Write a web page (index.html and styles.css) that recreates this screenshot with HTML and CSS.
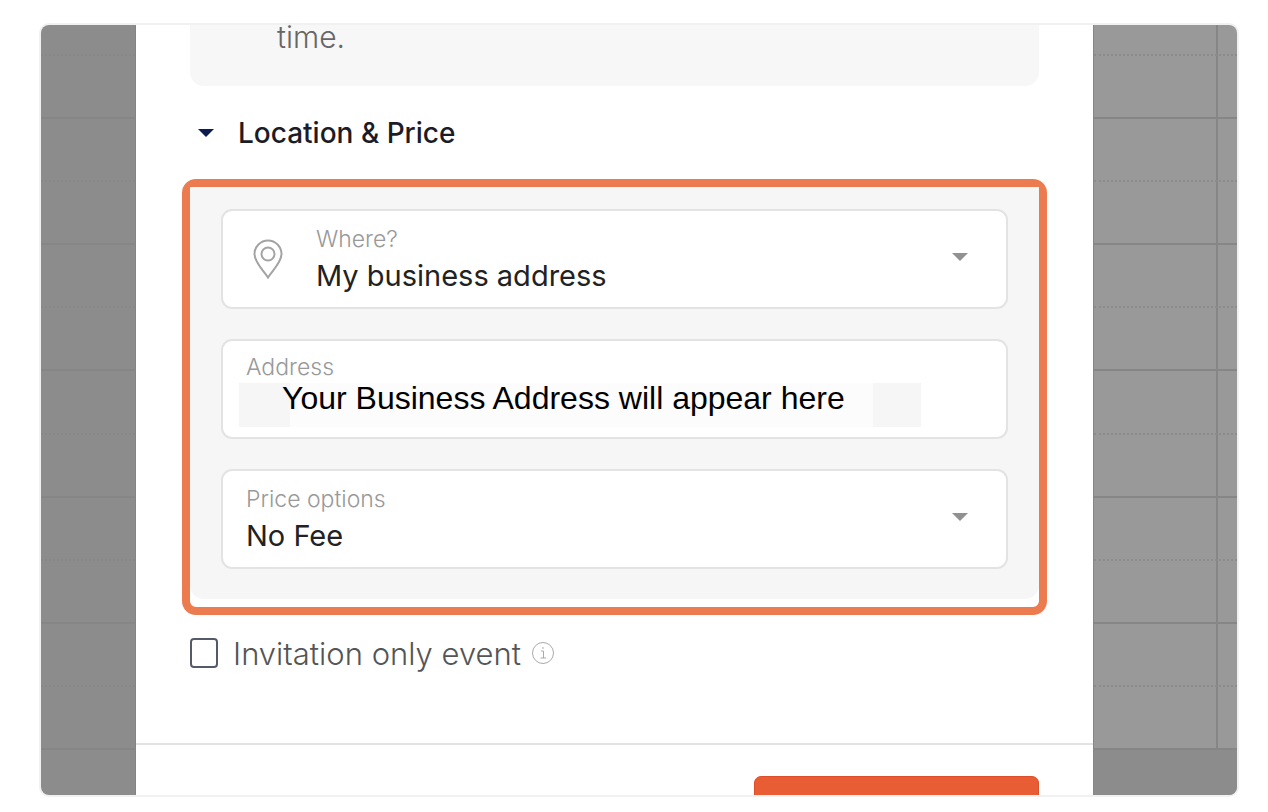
FILE: index.html
```html
<!DOCTYPE html>
<html lang="en">
<head>
<meta charset="utf-8">
<title>Location &amp; Price</title>
<link rel="stylesheet" href="styles.css">
</head>
<body>
<div class="frame">
  <div class="calendar calendar-left">
    <div class="slot"></div><div class="slot"></div><div class="slot"></div><div class="slot"></div>
    <div class="slot"></div><div class="slot"></div><div class="slot"></div><div class="slot"></div>
    <div class="slot"></div><div class="slot"></div><div class="slot"></div><div class="slot"></div>
    <div class="rest"></div>
  </div>

  <main class="modal">
    <div class="body">
      <div class="note">time.</div>

      <button class="section" type="button" aria-expanded="true">
        <svg class="caret" viewBox="0 0 16 8" aria-hidden="true"><path d="M0 0H16L8 8Z"/></svg>
        Location &amp; Price
      </button>

      <section class="highlight">
        <div class="panel">
          <div class="field">
            <svg class="pin" viewBox="0 0 30 40" aria-hidden="true">
              <path d="M15 38.500C11 32 1.500 23.500 1.500 15A13.500 13.500 0 0 1 28.500 15C28.500 23.500 19 32 15 38.500Z"/>
              <circle cx="15" cy="15" r="6.500"/>
            </svg>
            <div class="text">
              <label for="where">Where?</label>
              <select id="where"><option>My business address</option></select>
            </div>
            <svg class="arrow" viewBox="0 0 16 8" aria-hidden="true"><path d="M0 0H16L8 8Z"/></svg>
          </div>

          <div class="field field-address">
            <label for="address">Address</label>
            <input id="address" type="text" value="Your Business Address will appear here">
          </div>

          <div class="field">
            <div class="text">
              <label for="price">Price options</label>
              <select id="price"><option>No Fee</option></select>
            </div>
            <svg class="arrow" viewBox="0 0 16 8" aria-hidden="true"><path d="M0 0H16L8 8Z"/></svg>
          </div>
        </div>
      </section>

      <div class="invite">
        <input id="invite" type="checkbox">
        <label for="invite">Invitation only event</label>
        <svg class="info" viewBox="0 0 24 24" aria-hidden="true">
          <circle cx="12" cy="12" r="10.500"/>
          <path d="M10 10H12.500V17M9.500 17H15M12 6V8"/>
        </svg>
      </div>
    </div>
    <footer class="footer"><button class="submit" type="button" aria-label="Save"></button></footer>
  </main>

  <div class="calendar calendar-right">
    <div class="slot"></div><div class="slot"></div><div class="slot"></div><div class="slot"></div>
    <div class="slot"></div><div class="slot"></div><div class="slot"></div><div class="slot"></div>
    <div class="slot"></div><div class="slot"></div><div class="slot"></div><div class="slot"></div>
    <div class="rest"></div>
  </div>
</div>
</body>
</html>
```
FILE: styles.css
```css
* {
  box-sizing: border-box;
}

body {
  margin: 0;
  padding: 23px 29px 15px 39px;
  background: #fff;
  font-family: Inter, "Open Sans", sans-serif;
}

button,
input,
select {
  margin: 0;
  padding: 0;
  border: 0;
  background: none;
  font: inherit;
}

.frame {
  display: grid;
  grid-template-columns: 95px minmax(0, 1fr) 144px;
  height: calc(100vh - 38px);
  border: 2px solid #f1f1f1;
  border-radius: 10px;
  overflow: hidden;
}

/* Calendar behind the modal */
.calendar {
  display: grid;
  grid-template-rows: 31px repeat(11, minmax(0, 1fr)) 45px;
}

.calendar-left {
  background: #8c8c8c;
  border-right: 1px solid #848484;
}

.calendar-right {
  border-left: 1px solid #868686;
  background: linear-gradient(to right, transparent 122px, #868686 122px, #868686 124px, transparent 124px) #999;
}

.slot {
  border-bottom: 2px solid #868686;
}

.slot:nth-child(odd) {
  border-bottom: 2px dotted #8b8b8b;
}

.calendar-left .slot {
  border-bottom-color: #868686;
}

.calendar-left .slot:nth-child(odd) {
  border-bottom-color: #888;
}

.calendar-right .rest {
  background: #8c8c8c;
}

/* Modal */
.modal {
  display: flex;
  flex-direction: column;
  background: #fff;
  overflow: hidden;
}

.body {
  flex: 1;
  padding: 0 54px;
}

.note {
  height: 61px;
  padding-left: 87px;
  border-radius: 0 0 14px 14px;
  background: #f7f7f7;
  color: #666;
  font-size: 30px;
  font-weight: 300;
  line-height: 24px;
}

.section {
  display: flex;
  align-items: center;
  gap: 24px;
  height: 94px;
  margin-bottom: -1px;
  padding-left: 8px;
  color: #1c1c28;
  font-size: 28px;
  font-weight: 500;
}

.caret {
  width: 16px;
  height: 8px;
  fill: #0c1c50;
}

.highlight {
  margin: 0 -8px;
  padding-bottom: 8px;
  border: 8px solid #ec7b50;
  border-radius: 14px;
}

.panel {
  display: grid;
  gap: 30px;
  padding: 22px 31px 30px;
  border-radius: 0 0 14px 14px;
  background: #f6f6f6;
}

.field {
  display: flex;
  align-items: center;
  height: 100px;
  padding: 0 38px 0 23px;
  border: 2px solid #e3e3e3;
  border-radius: 11px;
  background: #fff;
}

.text {
  display: grid;
  flex: 1;
}

.field label {
  color: #999;
  font-size: 23px;
  font-weight: 300;
  line-height: 32px;
}

.field select {
  width: 100%;
  height: 40px;
  appearance: none;
  color: #222;
  font-size: 29px;
}

.pin {
  width: 30px;
  height: 40px;
  margin: 0 33px 0 7px;
  fill: none;
  stroke: #a3a3a3;
  stroke-width: 2;
}

.arrow {
  width: 16px;
  height: 8px;
  margin-bottom: 4px;
  fill: #919191;
}

.field-address {
  flex-direction: column;
  align-items: flex-start;
  padding: 10px 16px;
}

.field-address label {
  padding-left: 7px;
}

.field-address input {
  width: 682px;
  max-width: 100%;
  height: 44px;
  padding: 0 0 14px 43px;
  background: linear-gradient(to right, #f6f6f6 51px, #fcfcfc 51px, #fcfcfc 634px, #f6f6f6 634px);
  color: #000;
  font-family: "Liberation Sans", Arial, sans-serif;
  font-size: 32px;
  line-height: 30px;
}

.invite {
  display: flex;
  align-items: center;
  height: 76px;
  color: #555;
  font-size: 31px;
  font-weight: 300;
}

.invite input {
  width: 28px;
  height: 30px;
  margin-right: 15px;
  appearance: none;
  border: 2px solid #555a68;
  border-radius: 4px;
  background: #fff;
}

.info {
  width: 24px;
  height: 24px;
  margin-left: 10px;
  fill: none;
  stroke: #aaa;
  stroke-width: 1;
}

.footer {
  display: flex;
  justify-content: flex-end;
  height: 52px;
  padding: 31px 54px 0;
  border-top: 2px solid #e3e3e3;
}

.submit {
  width: 285px;
  height: 60px;
  border: 1px solid #dc4f2a;
  border-radius: 7px;
  background: #e85d34;
}
```
